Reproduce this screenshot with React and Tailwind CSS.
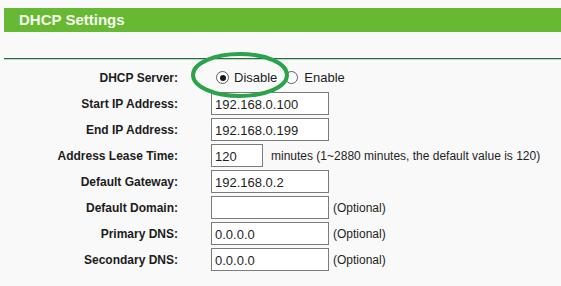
import React from "react";

const font = { fontFamily: '"Liberation Sans", Arial, sans-serif' };

function Field({ value = "", width = "w-[118px]" }) {
  return (
    <div className={`${width} h-[23px] border border-[#7b7b7b] bg-white pl-[3px] pt-[2px] flex items-center text-[13px] text-[#1e1e1e]`}>
      {value}
    </div>
  );
}

function Radio({ checked }) {
  return (
    <span className="w-[13px] h-[13px] rounded-full border border-[#5e5e5e] bg-white flex items-center justify-center shrink-0">
      {checked && <span className="w-[6px] h-[6px] rounded-full bg-[#1a1a1a]" />}
    </span>
  );
}

function Row({ label, children }) {
  return (
    <>
      <div className="h-[23px] flex items-center justify-end text-[12px] font-bold text-[#1c1c1c]">{label}</div>
      <div className="h-[23px] flex items-center">{children}</div>
    </>
  );
}

export default function App() {
  const note = "text-[12px] text-[#1e1e1e]";
  return (
    <div style={font} className="relative w-[561px] h-[286px] bg-[#f9f9f9] pt-[8px] overflow-hidden">
      {/* header bar */}
      <div className="ml-[4px] h-[24px] bg-[#67b934] flex items-center pl-[15px]">
        <span className="text-[15px] font-bold text-[#f5faec]">DHCP Settings</span>
      </div>

      <div className="mt-[26px] ml-[4px] h-px bg-[#2c6b43]" />
      <div className="ml-[4px] h-px bg-[#b9d6c1]" />

      <div className="mt-[6px] grid grid-cols-[178px_1fr] gap-x-[33px] gap-y-[3px]">
        <Row label="DHCP Server:">
          <div className="flex items-center text-[13px] text-[#1e1e1e]">
            <span className="ml-[5px]"><Radio checked /></span>
            <span className="ml-[5px]">Disable</span>
            <span className="ml-[8px]"><Radio /></span>
            <span className="ml-[6px]">Enable</span>
          </div>
        </Row>
        <Row label="Start IP Address:"><Field value="192.168.0.100" /></Row>
        <Row label="End IP Address:"><Field value="192.168.0.199" /></Row>
        <Row label="Address Lease Time:">
          <Field value="120" width="w-[52px]" />
          <span className={`ml-[8px] ${note}`}>minutes (1~2880 minutes, the default value is 120)</span>
        </Row>
        <Row label="Default Gateway:"><Field value="192.168.0.2" /></Row>
        <Row label="Default Domain:">
          <Field />
          <span className={`ml-[4px] ${note}`}>(Optional)</span>
        </Row>
        <Row label="Primary DNS:">
          <Field value="0.0.0.0" />
          <span className={`ml-[4px] ${note}`}>(Optional)</span>
        </Row>
        <Row label="Secondary DNS:">
          <Field value="0.0.0.0" />
          <span className={`ml-[4px] ${note}`}>(Optional)</span>
        </Row>
      </div>

      {/* hand-drawn highlight */}
      <svg className="absolute left-[188px] top-[50px] pointer-events-none" width="104" height="50" viewBox="0 0 104 50">
        <ellipse cx="52" cy="25" rx="47" ry="21" fill="none" stroke="#2ba34a" strokeWidth="4" />
      </svg>
    </div>
  );
}
